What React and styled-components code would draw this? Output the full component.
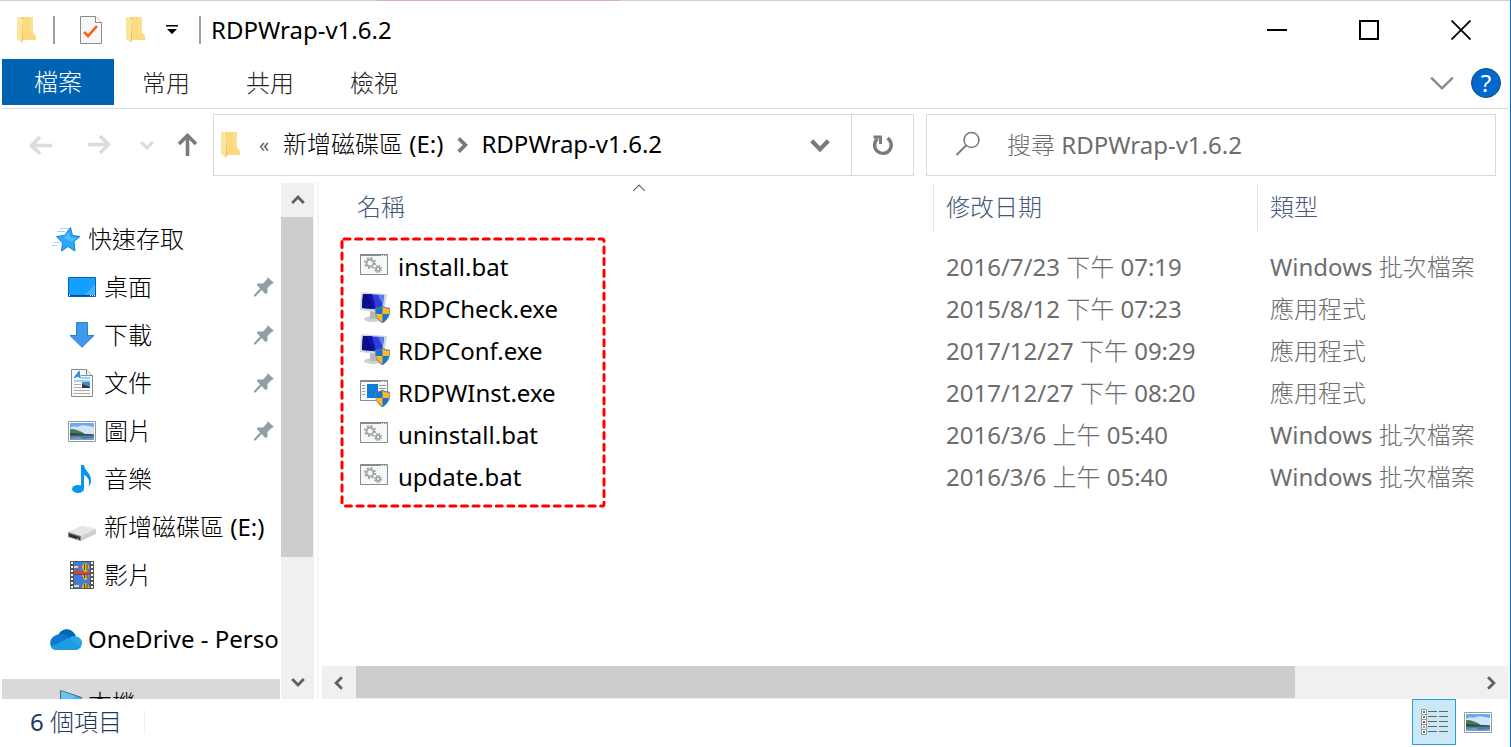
import React from "react";
import styled, { createGlobalStyle } from "styled-components";

const GlobalStyle = createGlobalStyle`
  * {
    box-sizing: border-box;
  }

  body {
    margin: 0;
    background: #fff;
    font-family: "Noto Sans", "Noto Sans CJK TC Light", "Noto Sans CJK TC", sans-serif;
    font-size: 24px;
    line-height: 34px;
    color: #000;
  }

  button,
  input {
    font: inherit;
    color: inherit;
    border: 0;
    padding: 0;
    background: none;
  }

  a {
    color: inherit;
    text-decoration: none;
  }

  svg {
    display: block;
    flex: none;
  }
`;

const Window = styled.div`
  display: flex;
  flex-direction: column;
  height: 100vh;
  min-height: 480px;
  padding-left: 2px;
  border-right: 1px solid #0a63b5;
  overflow: hidden;
`;

const TopEdge = styled.div`
  height: 1px;
  flex: none;
  margin-left: -2px;
  background: linear-gradient(90deg, #d2d2d2 25%, #dba9bb 25% 41%, #d2d2d2 41%);
`;

const TitleBar = styled.header`
  display: flex;
  align-items: center;
  height: 58px;
  flex: none;
  padding: 0 3px 0 15px;
`;

const QuickButton = styled.button`
  display: flex;
  align-items: center;
  justify-content: center;
  width: ${(props) => props.$width}px;
  height: 58px;
`;

const Divider = styled.span`
  width: 2px;
  height: 28px;
  margin-left: ${(props) => props.$gap || 0}px;
  background: #a0a0a0;
`;

const Title = styled.h1`
  flex: 1;
  margin: 0 0 0 10px;
  font-size: 24px;
  font-weight: 400;
`;

const WindowButton = styled.button`
  display: flex;
  align-items: center;
  justify-content: center;
  width: 92px;
  height: 58px;
`;

const Ribbon = styled.div`
  display: flex;
  align-items: flex-start;
  height: 50px;
  flex: none;
  margin-right: 2px;
  padding-right: 7px;
  border-bottom: 1px solid #dadbdc;
`;

const FileTab = styled.button`
  width: 112px;
  height: 46px;
  background: #0063b1;
  color: #fff;
`;

const Tab = styled.button`
  width: 104px;
  height: 48px;
  color: #222;
`;

const RibbonTools = styled.div`
  display: flex;
  align-items: center;
  gap: 16px;
  height: 48px;
  margin-left: auto;
`;

const Help = styled.button`
  width: 30px;
  height: 30px;
  border: 1px solid #114a86;
  border-radius: 50%;
  background: #0067cb;
  color: #fff;
  line-height: 28px;
  text-align: center;
`;

const Toolbar = styled.div`
  display: flex;
  flex: none;
  padding: 5px 14px 7px 10px;
`;

const History = styled.div`
  display: flex;
  align-items: center;
  width: 201px;
  flex: none;
`;

const HistoryButton = styled.button`
  display: flex;
  align-items: center;
  justify-content: center;
  width: ${(props) => props.$width}px;
  height: 62px;
`;

const AddressBar = styled.nav`
  display: flex;
  align-items: center;
  flex: 1 1 701px;
  min-width: 0;
  height: 62px;
  padding-left: 7px;
  border: 1px solid #d9d9d9;
`;

const More = styled.button`
  width: 42px;
  height: 60px;
  padding-left: 4px;
  color: #666;
  font-size: 20px;
`;

const Crumb = styled.a`
  padding-bottom: 2px;
  white-space: nowrap;
`;

const CrumbArrow = styled.span`
  display: flex;
  justify-content: center;
  width: 38px;
`;

const AddressButton = styled.button`
  display: flex;
  align-items: center;
  justify-content: center;
  width: 62px;
  height: 60px;
  margin-left: ${(props) => (props.$push ? "auto" : 0)};
  border-left: ${(props) => (props.$line ? "1px solid #d9d9d9" : 0)};
`;

const Search = styled.label`
  display: flex;
  align-items: center;
  flex: 1 1 570px;
  min-width: 0;
  height: 62px;
  margin-left: 12px;
  padding: 0 0 2px 28px;
  gap: 26px;
  border: 1px solid #d9d9d9;
`;

const SearchInput = styled.input`
  flex: 1;
  min-width: 0;
  height: 56px;
  outline: none;

  &::placeholder {
    color: #6d6d6d;
    opacity: 1;
  }
`;

const Body = styled.div`
  display: flex;
  flex: 1;
  min-height: 0;
  padding-right: 2px;
`;

const Sidebar = styled.nav`
  width: 279px;
  flex: none;
  padding-top: 32px;
  overflow: hidden;
`;

const Tree = styled.ul`
  margin: 0 0 16px;
  padding: 0;
  list-style: none;
`;

const TreeLink = styled.a`
  display: flex;
  align-items: center;
  height: 48px;
  margin-right: 1px;
  padding: ${(props) => (props.$root ? "0 0 0 48px" : "0 6px 0 66px")};
  gap: ${(props) => (props.$root ? 6 : 8)}px;
  white-space: nowrap;
  overflow: hidden;
  background: ${(props) => (props.$selected ? "#d9d9d9" : "transparent")};
`;

const TreeIcon = styled.span`
  display: flex;
  justify-content: center;
  flex: none;
  width: ${(props) => (props.$root ? 32 : 28)}px;
`;

const TreeLabel = styled.span`
  flex: 1;
`;

const ScrollBar = styled.div`
  display: flex;
  flex: none;
  flex-direction: ${(props) => (props.$vertical ? "column" : "row")};
  ${(props) => (props.$vertical ? "width: 33px;" : "height: 33px; margin-left: 3px;")}
  background: #f0f0f0;
`;

const ScrollButton = styled.button`
  display: flex;
  align-items: center;
  justify-content: center;
  flex: none;
  width: ${(props) => (props.$wide ? 34 : 33)}px;
  height: 34px;
`;

const Track = styled.div`
  flex: 1;
  min-height: 0;
`;

const Thumb = styled.div`
  background: #cdcdcd;
  ${(props) =>
    props.$vertical
      ? `width: 32px; height: ${props.$size}%;`
      : `height: 32px; width: ${props.$size}%;`}
`;

const Main = styled.main`
  display: flex;
  flex: 1;
  flex-direction: column;
  min-width: 0;
  margin-left: 3px;
  border-left: 2px solid #f5f5f5;
`;

const Files = styled.div`
  position: relative;
  flex: 1;
  min-height: 0;
  overflow: hidden;
`;

const Table = styled.table`
  width: 100%;
  table-layout: fixed;
  border-collapse: collapse;
`;

const HeadCell = styled.th`
  position: relative;
  width: ${(props) => props.$width};
  height: 63px;
  padding: 7px 0 0 ${(props) => (props.$first ? 38 : 13)}px;
  font-weight: 400;
  text-align: left;
  vertical-align: top;
  color: #43597a;
  background: ${(props) =>
    props.$first
      ? "none"
      : "linear-gradient(#e5e5e5, #e5e5e5) 0 0 / 1px 50px no-repeat"};
`;

const SortMark = styled.span`
  position: absolute;
  top: -2px;
  left: 0;
  width: 100%;
  padding-left: 26px;
  display: flex;
  justify-content: center;
`;

const Cell = styled.td`
  height: 42px;
  padding: 0 0 0 13px;
  color: #6d6d6d;
  white-space: nowrap;
`;

const NameCell = styled(Cell)`
  padding-left: 41px;
  color: #000;
`;

const FileName = styled.span`
  display: flex;
  align-items: center;
  gap: 8px;
`;

const FileIcon = styled.span`
  width: 30px;
  padding-bottom: 4px;
`;

const Highlight = styled.svg`
  position: absolute;
  top: 54px;
  left: 21px;
`;

const StatusBar = styled.footer`
  display: flex;
  align-items: flex-start;
  flex: none;
  height: 48px;
  padding: 0 10px 0 28px;
  color: #1e395b;
`;

const Count = styled.span`
  margin-top: 11px;
  padding-right: 22px;
  line-height: 24px;
  border-right: 1px solid #f0f0f0;
`;

const Views = styled.div`
  display: flex;
  margin-left: auto;
`;

const ViewButton = styled.button`
  display: flex;
  align-items: center;
  justify-content: center;
  width: 44px;
  height: 46px;
  border: 1px solid ${(props) => (props.$active ? "#26a0da" : "transparent")};
  background: ${(props) => (props.$active ? "#cbe8f6" : "transparent")};
`;

const FolderIcon = () => (
  <svg width="20" height="28" viewBox="0 0 20 28">
    <path d="M4 1h12v16l3 3v4H4z" fill="#f5cc63" />
    <path d="M6 1h10v16l3 3v4H6z" fill="#fbdb7d" />
    <path d="M12 1h4v16h-4z" fill="#fde08c" />
    <path d="M0 1h2l4 3v19l-1 4-5-4z" fill="#fbe49c" />
    <path d="M6 4v20l-1 3z" fill="#dfb551" />
  </svg>
);

const CheckDocIcon = () => (
  <svg width="22" height="28" viewBox="0 0 22 28">
    <path d="M.5.5h15l6 6v21H.5z" fill="#f7f7f7" stroke="#8c8c8c" />
    <path d="M15.500.5v6h6" fill="#fff" stroke="#8c8c8c" />
    <path d="M4 16l4 4 9-10" fill="none" stroke="#f7630c" strokeWidth="2.600" />
  </svg>
);

const CustomizeIcon = () => (
  <svg width="12" height="10" viewBox="0 0 12 10">
    <path d="M0 0h12v1.500H0zM1 4h10L6 9z" fill="#000" />
  </svg>
);

const Chevron = ({ size = 12, width = 2, color = "#606060", turn = 0, flat = 0.5 }) => (
  <svg width={size} height={size} viewBox="0 0 12 12">
    <path
      d={`M1 ${6 - flat * 5}L6 ${6 + flat * 5}L11 ${6 - flat * 5}`}
      fill="none"
      stroke={color}
      strokeWidth={width}
      transform={`rotate(${turn} 6 6)`}
    />
  </svg>
);

const ArrowIcon = ({ turn = 0, color = "#dcdcdc" }) => (
  <svg width="24" height="24" viewBox="0 0 24 24">
    <g transform={`rotate(${turn} 12 12)`} fill="none" stroke={color} strokeWidth="3.600">
      <path d="M2 12.500h21" />
      <path d="M11 4L2.500 12.500 11 21" />
    </g>
  </svg>
);

const RefreshIcon = () => (
  <svg width="22" height="24" viewBox="0 0 22 24">
    <path d="M15.500 5.200A8.300 8.300 0 1 1 5.500 5.800" fill="none" stroke="#7a7a7a" strokeWidth="3.400" />
    <path d="M1.500 2.500h8.500v8.500H7V5.500H1.500z" fill="#7a7a7a" />
  </svg>
);

const SearchIcon = () => (
  <svg width="26" height="26" viewBox="0 0 26 26">
    <circle cx="16.500" cy="9" r="7.500" fill="none" stroke="#777" strokeWidth="1.500" />
    <path d="M11 14.500L1.500 24" stroke="#777" strokeWidth="1.800" />
  </svg>
);

const StarIcon = () => (
  <svg width="30" height="26" viewBox="0 0 30 26">
    <path d="M9 2.500h9M6 5.500h8M3 16.500h6M1 19.500h5" stroke="#a5d4f2" />
    <path
      d="M19.500 1.500l2 8 7.500 1-6 5 1 9.500-7-4.500-6.500 4.500 1-8-6-6.500 8-1z"
      fill="#2ba7f7"
      stroke="#1583d8"
    />
    <path d="M18 6l1.500 5.500 6 .500-5 3.500-8-3.500z" fill="#55bdfb" />
  </svg>
);

const DesktopIcon = () => (
  <svg width="28" height="20" viewBox="0 0 28 20">
    <path d="M.5.5h27v19H.5z" fill="#159fff" stroke="#0065b3" />
    <path d="M27 7v11H17z" fill="#43b3ff" />
    <path d="M0 18.500h28" stroke="#004f91" strokeWidth="1" />
    <path d="M1 18.500h1M22 18.500h1M24 18.500h1M26 18.500h1" stroke="#fff" />
  </svg>
);

const DownloadIcon = () => (
  <svg width="26" height="26" viewBox="0 0 26 26">
    <path d="M7.500.5h11v13h6.500L13 25.300 1 13.500h6.500z" fill="#3d9be9" stroke="#2b7fcb" />
  </svg>
);

const DocumentIcon = () => (
  <svg width="22" height="28" viewBox="0 0 22 28">
    <path d="M.5.5h15l6 6v21H.5z" fill="#fafafa" stroke="#8c8c8c" />
    <path d="M15.500.5v6h6" fill="#eee" stroke="#8c8c8c" />
    <path d="M3.500 9L8 3l1 6M5.500 7H9" fill="none" stroke="#1583d8" strokeWidth="1.500" />
    <path d="M10 6.500h5M10 9h9M3 12h16" stroke="#39a4e8" />
    <path d="M3 15.500h7M3 18.500h7M3 21.500h16M3 24.500h16" stroke="#aaa" />
    <path d="M11 13h8v6h-8z" fill="#4f86c4" />
    <path d="M11 15l8 3v1h-8z" fill="#23364e" />
  </svg>
);

const PictureIcon = () => (
  <svg width="28" height="21" viewBox="0 0 28 21">
    <path d="M.5.5h27v20H.5z" fill="#fff" stroke="#999" />
    <path d="M2 2h24v9H2z" fill="#6da8f4" />
    <path d="M2 7c4-3 7 0 10-2s9 0 14 1v7H2z" fill="#cfe5f8" />
    <path d="M2 8c6 0 11 2 15 5l9 .500V16H2z" fill="#477a54" />
    <path d="M2 12l14 1 10 .500V15H2z" fill="#294a44" />
    <path d="M2 14.500h24V19H2z" fill="#527da8" />
    <path d="M2 17l9-1 4 2 11-1v2H2z" fill="#769fc6" />
  </svg>
);

const MusicIcon = () => (
  <svg width="20" height="28" viewBox="0 0 20 28">
    <ellipse cx="6" cy="24" rx="6" ry="4" fill="#0797f2" />
    <path
      d="M9 0h3c1 7 8 8 7 17-.4 2-1.500 3.500-2.500 4.500 1.500-5 .5-9-4.500-11.500V24H9z"
      fill="#0797f2"
    />
  </svg>
);

const DriveIcon = () => (
  <svg width="28" height="28" viewBox="0 0 28 28">
    <path d="M0 19l14-6 14 3v5l-15 7-13-4z" fill="#cfcfcf" />
    <path d="M0 19l14-6 14 3-15 7z" fill="#e6e6e6" />
    <path d="M0 19l13 4v5L0 24z" fill="#8a8a8a" />
    <path d="M1 20.500l11 3.500v3L1 23.500z" fill="#2e2e2e" />
    <path d="M9 25.500l2 .5" stroke="#60e060" />
  </svg>
);

const VideoIcon = () => (
  <svg width="24" height="28" viewBox="0 0 24 28">
    <path d="M0 0h24v28H0z" fill="#555" />
    <path d="M2 1v27M22 1v27" stroke="#fff" strokeWidth="2" strokeDasharray="2 2" />
    <path d="M4 1h16v12H4zM4 14h16v13H4z" fill="#3f7bdc" />
    <path d="M4 11l4-3 3 2 3 0 6 1v2H4z" fill="#d6453b" />
    <path d="M4 6h4M4 25h5" stroke="#eadb7b" strokeWidth="2" />
    <path d="M12 6c0-5 7-5 7 0 0 3-2 3-2.500 5h-2C14 9 12 9 12 6zM12 14h7c0 2-2 3-2.500 5h-2C14 17 12 16 12 14zM12 26c0-5 7-5 7 0v1h-7z" fill="#f0b51c" />
    <path d="M14.500 3v6M17 3v6M14.500 14v3M17 14v3M14.500 23v4M17 23v4" stroke="#5a4014" />
  </svg>
);

const CloudIcon = () => (
  <svg width="32" height="21" viewBox="0 0 32 21">
    <path d="M8 7C11-2 23-2 26 8l-6 6z" fill="#0364b8" />
    <path d="M8 5.500c5-2 9 1 11 3l-6 12H6C-2 19-2 8 8 5.500z" fill="#0f78d4" />
    <path d="M19 9c3-2 5-2 7-1.500 8 1 8 12 0 13.500H6c-2 0-4-1.500-5-3z" fill="#28a8ea" />
    <path d="M19 9l-8 4.500L1 18c1 2 3 3 6 3h19c2-.4 4-1.500 5-3.500z" fill="#1f9be2" />
  </svg>
);

const ComputerIcon = () => (
  <svg width="32" height="28" viewBox="-10 -1 32 28">
    <path d="M.5.5l21 7v15l-21 4z" fill="#43b0fa" stroke="#4a6478" />
    <path d="M1 1l14 5-14 15z" fill="#6bc2fb" />
  </svg>
);

const PinIcon = () => (
  <svg width="20" height="20" viewBox="0 0 20 20">
    <path d="M13.500 0L20 6l-2.500 1-4 4v5l-2 1-4-4-6 6.500H0V18l6-6.500-3.500-4L4 6.500h5l4-4z" fill="#929ea5" />
  </svg>
);

const Shield = () => (
  <g transform="translate(15 15)">
    <path d="M7.500 0c2 1.500 4 2 7 2 1 7-2 12-7 15C2.500 14 0 9 .5 2c3 0 5-.5 7-2z" fill="#1676ce" stroke="#777d83" strokeWidth=".8" />
    <path d="M7.500.800V8H14c.5-2 .4-3 .3-5.200-2.800 0-5-.8-6.800-2zM7.500 8v8.300C4 14 1.500 11.500 1 8z" fill="#fdb827" />
  </g>
);

const BatIcon = () => (
  <svg width="28" height="22" viewBox="0 0 28 22">
    <path d="M.5.5h27v20H.5z" fill="#f7f8f8" stroke="#868b8e" />
    <path d="M1 1.500h26" stroke="#868b8e" />
    <path d="M21 1.500h1M23 1.500h1M25 1.500h1" stroke="#fff" />
    <g fill="none" stroke="#9fa4a8">
      <circle cx="10" cy="9" r="5" strokeWidth="2" strokeDasharray="2 1.930" />
      <circle cx="10" cy="9" r="3.500" strokeWidth="1.800" />
      <circle cx="18" cy="15" r="3.300" strokeWidth="1.600" strokeDasharray="1.500 1.090" />
      <circle cx="18" cy="15" r="1.900" strokeWidth="1.600" />
    </g>
  </svg>
);

const RdpIcon = () => (
  <svg width="30" height="32" viewBox="0 0 30 32">
    <ellipse cx="13" cy="28" rx="9" ry="3" fill="#cdd1d4" />
    <path d="M10 20h8l1 8h-9z" fill="#b3b8bc" />
    <path d="M1 1l26 2-3 19-24-3z" fill="#cfd8df" />
    <path d="M3 3l21 1-2 15-20-2z" fill="#2a3fdc" />
    <path d="M3 3l9 0 4 15-14-1z" fill="#0f14a6" />
    <path d="M3 3l4 0 6 14.500-11-.500z" fill="#0a0d86" />
    <path d="M18 4l6 0-1 10z" fill="#5f7df2" />
    <Shield />
  </svg>
);

const InstallerIcon = () => (
  <svg width="30" height="32" viewBox="0 0 30 32">
    <path d="M.5 5.500h27v20H.5z" fill="#f7f8f8" stroke="#868b8e" />
    <path d="M1 6.500h26" stroke="#868b8e" />
    <path d="M21 6.500h1M23 6.500h1M25 6.500h1" stroke="#fff" />
    <path d="M7 9h11v14H7z" fill="#0b7dda" />
    <path d="M2 10.500h3M2 13.500h3M2 16.500h3M2 19.500h3M19 10.500h7M19 13.500h7M19 16.500h7" stroke="#999" />
    <Shield />
  </svg>
);

const DetailsIcon = () => (
  <svg width="28" height="28" viewBox="0 0 28 28">
    {["#3c7d8c", "#6d7340", "#b3461b", "#7ea28a", "#2f7d8c"].map((color, i) => (
      <g key={color} transform={`translate(0 ${i * 5})`}>
        <path d="M1.500 1.500h5v5h-5z" fill="#fff" stroke="#999" />
        <path d="M3 3h2v2H3z" fill={color} />
        <path d="M8 3.500h9M19 3.500h9" stroke="#666" />
      </g>
    ))}
  </svg>
);

const quickAccess = [
  { name: "桌面", icon: DesktopIcon, pinned: true },
  { name: "下載", icon: DownloadIcon, pinned: true },
  { name: "文件", icon: DocumentIcon, pinned: true },
  { name: "圖片", icon: PictureIcon, pinned: true },
  { name: "音樂", icon: MusicIcon },
  { name: "新增磁碟區 (E:)", icon: DriveIcon },
  { name: "影片", icon: VideoIcon },
];

const files = [
  { name: "install.bat", date: "2016/7/23 下午 07:19", type: "Windows 批次檔案", icon: BatIcon },
  { name: "RDPCheck.exe", date: "2015/8/12 下午 07:23", type: "應用程式", icon: RdpIcon },
  { name: "RDPConf.exe", date: "2017/12/27 下午 09:29", type: "應用程式", icon: RdpIcon },
  { name: "RDPWInst.exe", date: "2017/12/27 下午 08:20", type: "應用程式", icon: InstallerIcon },
  { name: "uninstall.bat", date: "2016/3/6 上午 05:40", type: "Windows 批次檔案", icon: BatIcon },
  { name: "update.bat", date: "2016/3/6 上午 05:40", type: "Windows 批次檔案", icon: BatIcon },
];

const TreeItem = ({ name, icon: Icon, pinned, root, selected }) => (
  <li>
    <TreeLink href="#" $root={root} $selected={selected}>
      <TreeIcon $root={root}>
        <Icon />
      </TreeIcon>
      <TreeLabel>{name}</TreeLabel>
      {pinned && <PinIcon />}
    </TreeLink>
  </li>
);

const App = () => {
  return (
    <Window lang="zh-Hant">
      <GlobalStyle />
      <TopEdge />
      <TitleBar>
        <FolderIcon />
        <Divider $gap={16} />
        <QuickButton $width={72} aria-label="內容">
          <CheckDocIcon />
        </QuickButton>
        <QuickButton $width={18} aria-label="新增資料夾">
          <FolderIcon />
        </QuickButton>
        <QuickButton $width={54} aria-label="自訂快速存取工具列">
          <CustomizeIcon />
        </QuickButton>
        <Divider />
        <Title>RDPWrap-v1.6.2</Title>
        <WindowButton aria-label="最小化">
          <svg width="20" height="20" viewBox="0 0 20 20">
            <path d="M0 10h20" stroke="#000" strokeWidth="2" />
          </svg>
        </WindowButton>
        <WindowButton aria-label="最大化">
          <svg width="20" height="20" viewBox="0 0 20 20">
            <path d="M1 1h18v18H1z" fill="none" stroke="#000" strokeWidth="2" />
          </svg>
        </WindowButton>
        <WindowButton aria-label="關閉">
          <svg width="20" height="20" viewBox="0 0 20 20">
            <path d="M.5.5l19 19M19.500.5l-19 19" stroke="#000" strokeWidth="1.800" />
          </svg>
        </WindowButton>
      </TitleBar>

      <Ribbon>
        <FileTab>檔案</FileTab>
        <Tab>常用</Tab>
        <Tab>共用</Tab>
        <Tab>檢視</Tab>
        <RibbonTools>
          <button aria-label="展開功能區">
            <Chevron size={26} width={1.1} color="#8a8a8a" />
          </button>
          <Help>?</Help>
        </RibbonTools>
      </Ribbon>

      <Toolbar>
        <History>
          <HistoryButton $width={58} aria-label="上一頁">
            <ArrowIcon />
          </HistoryButton>
          <HistoryButton $width={58} aria-label="下一頁">
            <ArrowIcon turn={180} />
          </HistoryButton>
          <HistoryButton $width={38} aria-label="最近的位置">
            <Chevron size={14} width={2.8} color="#dcdcdc" />
          </HistoryButton>
          <HistoryButton $width={44} aria-label="上移">
            <ArrowIcon turn={90} color="#7a7a7a" />
          </HistoryButton>
        </History>
        <AddressBar>
          <FolderIcon />
          <More>«</More>
          <Crumb href="#">新增磁碟區 (E:)</Crumb>
          <CrumbArrow>
            <Chevron size={16} width={2.8} color="#7a7a7a" turn={-90} />
          </CrumbArrow>
          <Crumb href="#">RDPWrap-v1.6.2</Crumb>
          <AddressButton $push aria-label="先前的位置">
            <Chevron size={20} width={2.6} color="#7a7a7a" />
          </AddressButton>
          <AddressButton $line aria-label="重新整理">
            <RefreshIcon />
          </AddressButton>
        </AddressBar>
        <Search>
          <SearchIcon />
          <SearchInput type="text" placeholder="搜尋 RDPWrap-v1.6.2" aria-label="搜尋" />
        </Search>
      </Toolbar>

      <Body>
        <Sidebar>
          <Tree>
            <TreeItem name="快速存取" icon={StarIcon} root />
            {quickAccess.map((item) => (
              <TreeItem key={item.name} {...item} />
            ))}
          </Tree>
          <Tree>
            <TreeItem name="OneDrive - Personal" icon={CloudIcon} root />
          </Tree>
          <Tree>
            <TreeItem name="本機" icon={ComputerIcon} root selected />
          </Tree>
        </Sidebar>
        <ScrollBar $vertical>
          <ScrollButton aria-label="向上捲動">
            <Chevron size={14} width={2.4} turn={180} />
          </ScrollButton>
          <Track>
            <Thumb $vertical $size={76} />
          </Track>
          <ScrollButton aria-label="向下捲動">
            <Chevron size={14} width={2.4} />
          </ScrollButton>
        </ScrollBar>

        <Main>
          <Files>
            <Table>
              <thead>
                <tr>
                  <HeadCell $first $width="614px">
                    名稱
                    <SortMark>
                      <Chevron size={14} width={1} turn={180} />
                    </SortMark>
                  </HeadCell>
                  <HeadCell $width="324px">修改日期</HeadCell>
                  <HeadCell $width="auto">類型</HeadCell>
                </tr>
              </thead>
              <tbody>
                {files.map(({ name, date, type, icon: Icon }) => (
                  <tr key={name}>
                    <NameCell>
                      <FileName>
                        <FileIcon>
                          <Icon />
                        </FileIcon>
                        {name}
                      </FileName>
                    </NameCell>
                    <Cell>{date}</Cell>
                    <Cell>{type}</Cell>
                  </tr>
                ))}
              </tbody>
            </Table>
            <Highlight width="266" height="271" viewBox="0 0 266 271">
              <rect
                x="2"
                y="2"
                width="262"
                height="267"
                rx="2"
                fill="none"
                stroke="#f00"
                strokeWidth="3"
                strokeLinecap="round"
                strokeDasharray="6 5.600"
              />
            </Highlight>
          </Files>
          <ScrollBar>
            <ScrollButton $wide aria-label="向左捲動">
              <Chevron size={14} width={2.4} turn={90} />
            </ScrollButton>
            <Track>
              <Thumb $size={84} />
            </Track>
            <ScrollButton $wide aria-label="向右捲動">
              <Chevron size={14} width={2.4} turn={-90} />
            </ScrollButton>
          </ScrollBar>
        </Main>
      </Body>

      <StatusBar>
        <Count>6 個項目</Count>
        <Views>
          <ViewButton $active aria-label="詳細資料">
            <DetailsIcon />
          </ViewButton>
          <ViewButton aria-label="大圖示">
            <PictureIcon />
          </ViewButton>
        </Views>
      </StatusBar>
    </Window>
  );
};

export default App;
